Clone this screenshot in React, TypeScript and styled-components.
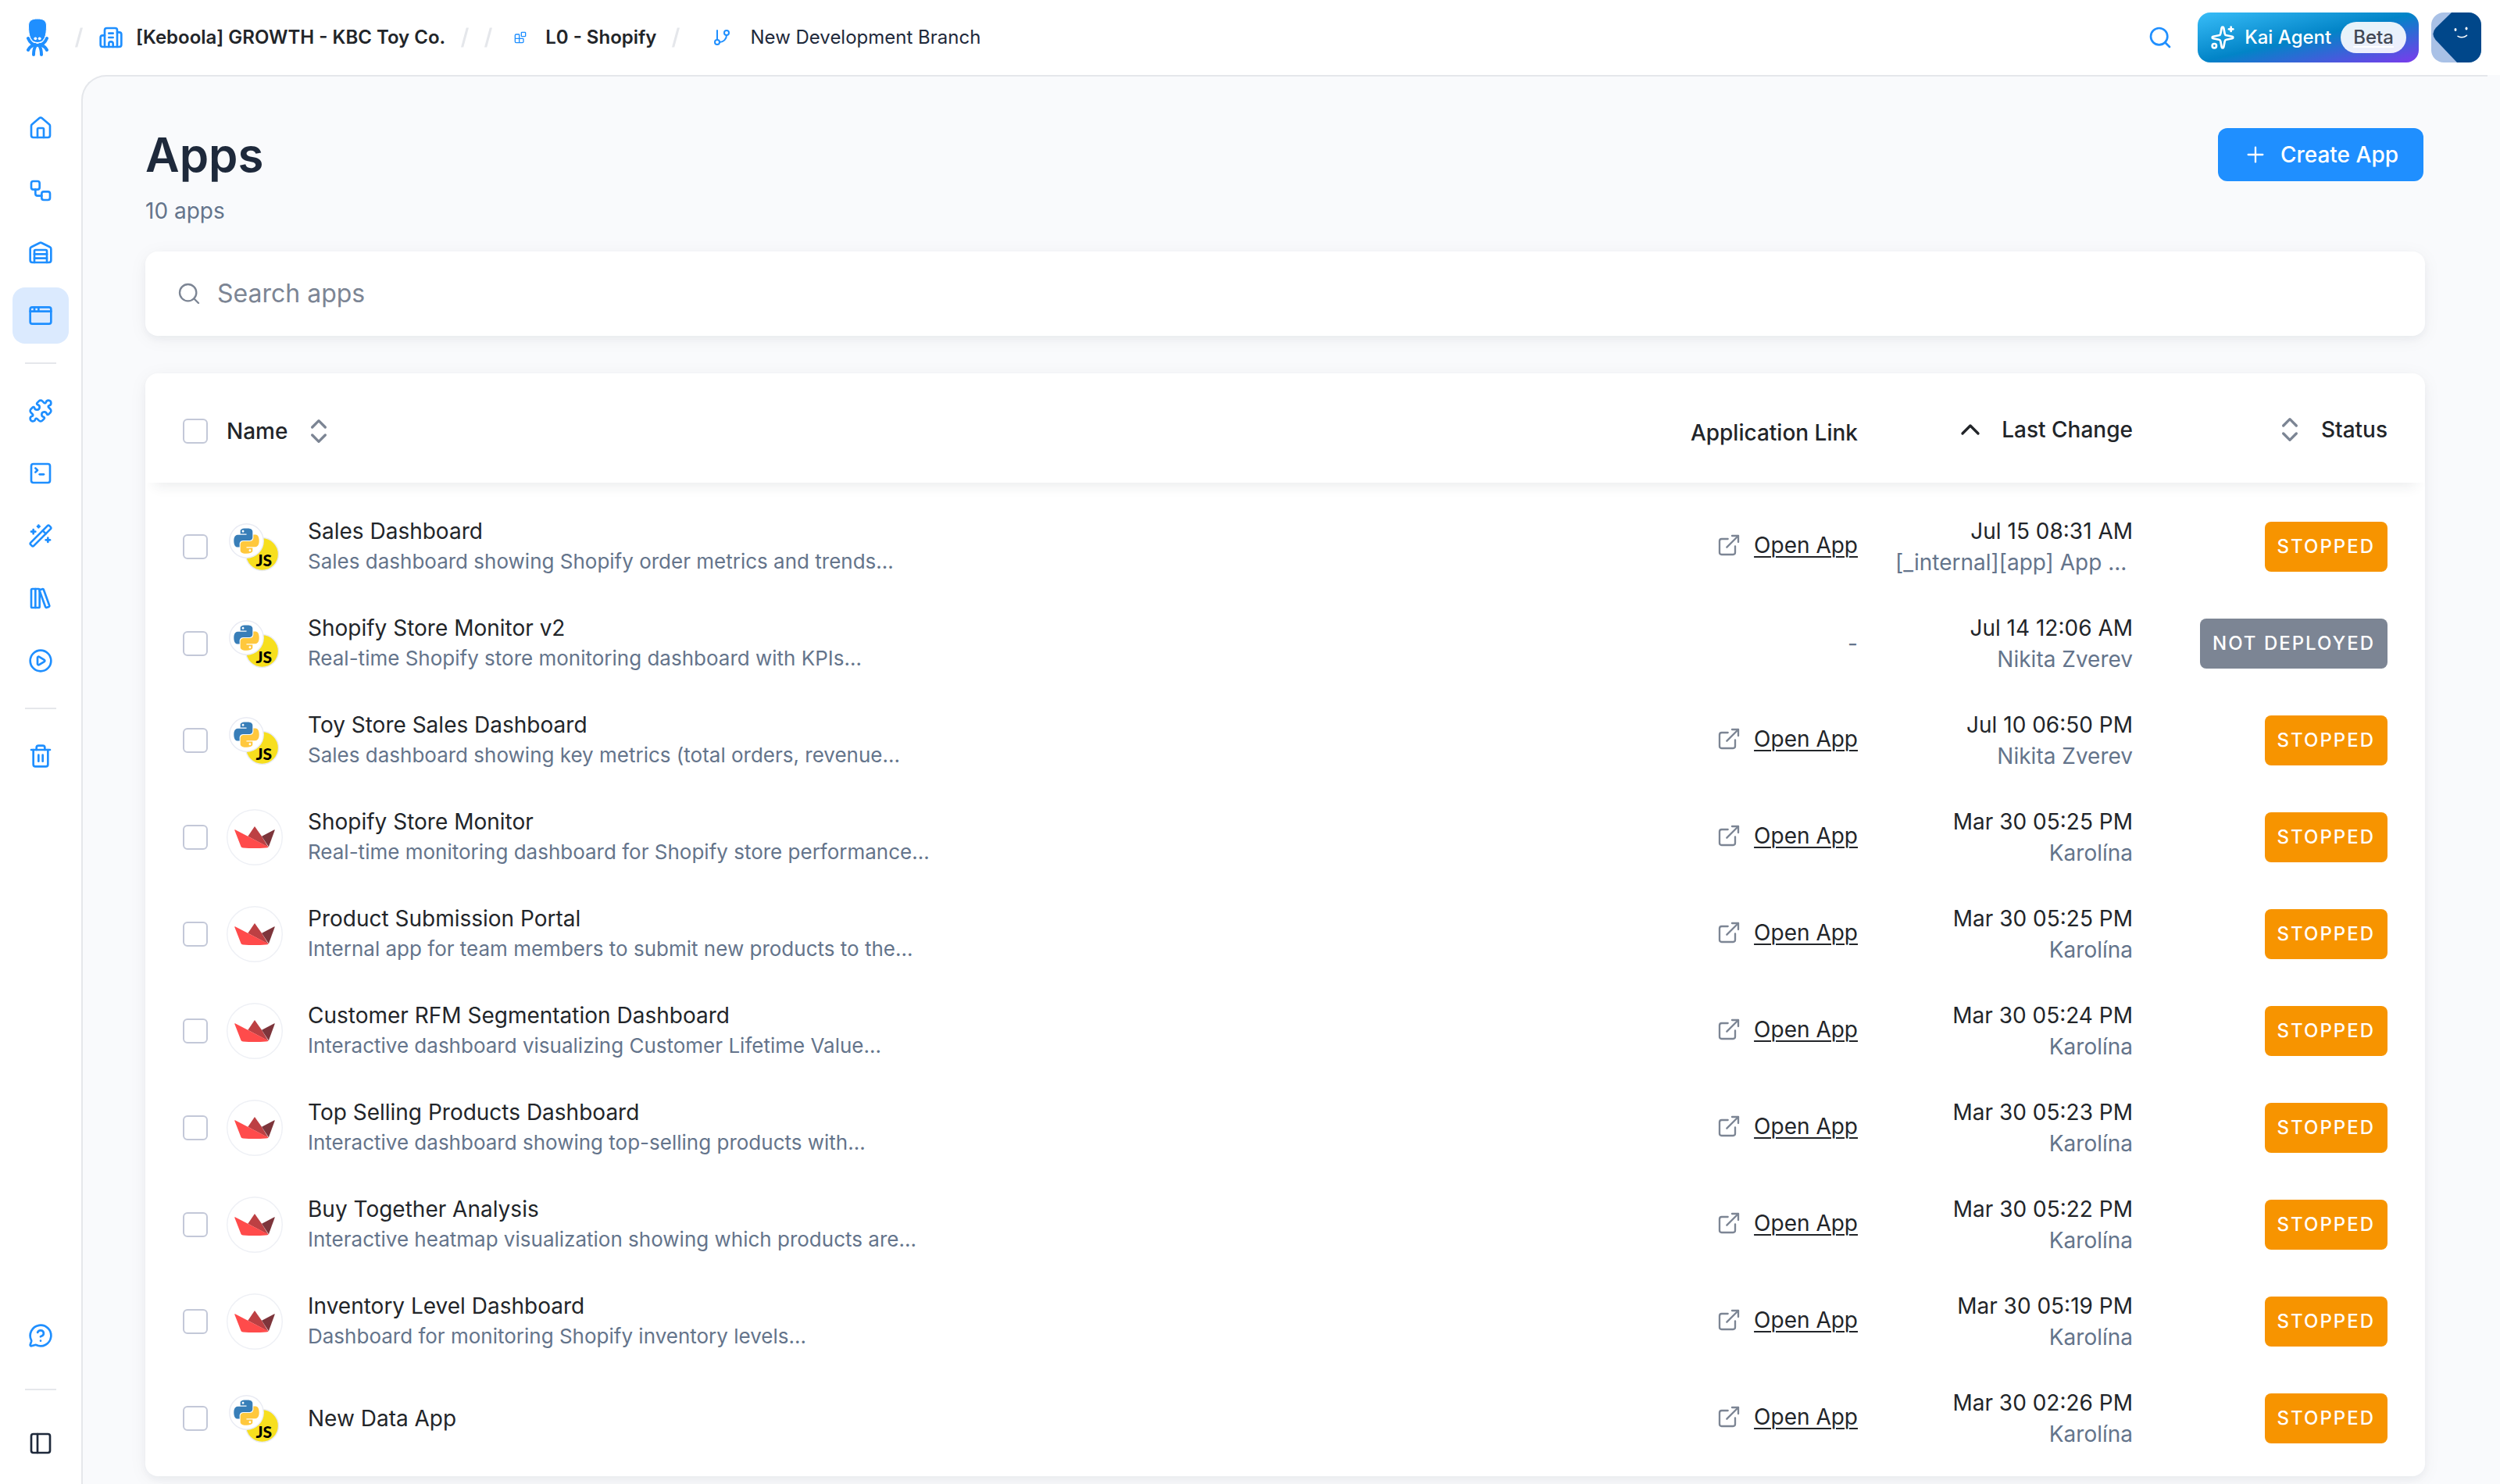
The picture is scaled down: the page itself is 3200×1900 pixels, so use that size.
import React from "react";
import styled, { createGlobalStyle, css } from "styled-components";
import {
  AppWindow,
  Blocks,
  Building2,
  ChevronUp,
  ChevronsUpDown,
  CirclePlay,
  ExternalLink,
  GitBranch,
  House,
  LibraryBig,
  MessageCircleQuestionMark,
  PanelLeft,
  Plus,
  Puzzle,
  Search,
  Sparkles,
  SquareTerminal,
  Trash2,
  WandSparkles,
  Warehouse,
  Workflow,
} from "lucide-react";

const color = {
  blue: "#1f8fff",
  ink: "#222529",
  navy: "#1e293b",
  slate: "#64748b",
  gray: "#7c8594",
  line: "#e5e7eb",
  page: "#f9fafc",
  orange: "#f79400",
};

const GlobalStyle = createGlobalStyle`
  *, *::before, *::after { box-sizing: border-box; }
  body {
    margin: 0;
    background: #fff;
    color: ${color.ink};
    font-family: Inter, "Liberation Sans", sans-serif;
    font-size: 28px;
    line-height: 40px;
    -webkit-font-smoothing: antialiased;
  }
  button, input { font: inherit; color: inherit; }
  svg { display: block; flex: none; }
`;

/* ---------- frame ---------- */

const Shell = styled.div`
  display: flex;
  flex-direction: column;
  min-height: 100vh;
`;

const TopBar = styled.header`
  display: flex;
  align-items: center;
  justify-content: space-between;
  height: 96px;
  padding: 0 24px 0 34px;
`;

const Body = styled.div`
  display: flex;
  flex: 1;
`;

const Sidebar = styled.nav`
  display: flex;
  flex-direction: column;
  justify-content: space-between;
  width: 104px;
  padding: 32px 16px 16px;
`;

const Main = styled.main`
  flex: 1;
  min-width: 0;
  display: flex;
  padding-right: 16px;
  background: ${color.page};
  border-top-left-radius: 32px;
`;

const Content = styled.div`
  flex: 1;
  min-width: 0;
  padding: 66px 80px 10px;
  border-top: 2px solid ${color.line};
  border-left: 2px solid ${color.line};
  border-top-left-radius: 32px;
`;

/* ---------- top bar ---------- */

const Crumbs = styled.div`
  display: flex;
  align-items: center;
  font-size: 24px;
  line-height: 32px;
`;

const Crumb = styled.a<{ $strong?: boolean; $gap: number }>`
  display: flex;
  align-items: center;
  gap: ${(p) => p.$gap}px;
  color: ${(p) => (p.$strong ? color.ink : color.navy)};
  font-weight: ${(p) => (p.$strong ? 600 : 400)};
  text-decoration: none;

  svg { color: ${color.blue}; }
`;

const SlashMark = styled.svg<{ $before: number; $after: number }>`
  margin: 0 ${(p) => p.$after}px 0 ${(p) => p.$before}px;
  color: ${color.line};
`;

const TopActions = styled.div`
  display: flex;
  align-items: center;
  gap: 16px;
`;

const PlainButton = styled.button`
  border: 0;
  padding: 0;
  background: none;
  cursor: pointer;
`;

const TopSearch = styled(PlainButton)`
  margin-right: 16px;
  color: ${color.blue};
`;

const KaiButton = styled(PlainButton)`
  display: flex;
  align-items: center;
  gap: 12px;
  height: 64px;
  padding: 0 16px;
  border-radius: 16px;
  color: #fff;
  font-size: 24px;
  font-weight: 500;
  background: linear-gradient(to bottom right, #38bdf8, #0284c7 50%, #7c3aed);
`;

const BetaPill = styled.span`
  padding: 0 16px;
  border-radius: 20px;
  color: #424854;
  background: rgba(255, 255, 255, 0.9);
  text-decoration: underline 2px #fff;
  text-underline-offset: 3px;
`;

const AvatarButton = styled(PlainButton)`
  overflow: hidden;
  border-radius: 16px;
`;

/* ---------- sidebar ---------- */

const NavGroup = styled.div`
  display: flex;
  flex-direction: column;
  align-items: center;
  gap: 8px;
`;

const NavLink = styled.a<{ $active?: boolean; $dark?: boolean }>`
  display: grid;
  place-items: center;
  width: 72px;
  height: 72px;
  border-radius: 16px;
  color: ${(p) => (p.$dark ? color.navy : color.blue)};
  background: ${(p) => (p.$active ? "#dbeafe" : "transparent")};
`;

const NavRule = styled.hr<{ $wide?: boolean }>`
  width: 40px;
  height: 2px;
  margin: ${(p) => (p.$wide ? 24 : 16)}px 0;
  border: 0;
  background: ${color.line};
`;

/* ---------- page header and search ---------- */

const PageHead = styled.div`
  display: flex;
  align-items: flex-start;
  justify-content: space-between;
  padding-right: 2px;
  margin-bottom: 32px;
`;

const Title = styled.h1`
  margin: 0;
  color: ${color.navy};
  font-size: 60px;
  font-weight: 600;
  line-height: 68px;
`;

const Subtitle = styled.p`
  margin: 18px 0 0;
  color: ${color.slate};
`;

const CreateButton = styled(PlainButton)`
  display: flex;
  align-items: center;
  gap: 16px;
  height: 68px;
  padding: 0 32px;
  border-radius: 12px;
  color: #fff;
  font-weight: 500;
  background: ${color.blue};
`;

const card = css`
  background: #fff;
  border-radius: 16px;
  box-shadow: 0 4px 24px rgba(30, 41, 59, 0.05), 0 4px 8px rgba(30, 41, 59, 0.04);
`;

const SearchCard = styled.label`
  ${card}
  display: flex;
  align-items: center;
  gap: 20px;
  height: 108px;
  padding: 0 40px;
  margin-bottom: 48px;
  color: ${color.gray};
`;

const SearchInput = styled.input`
  flex: 1;
  border: 0;
  padding: 0;
  outline: 0;
  background: none;
  font-size: 32px;

  &::placeholder {
    color: ${color.gray};
    opacity: 1;
  }
`;

/* ---------- table ---------- */

const TableCard = styled.section`
  ${card}
  padding-bottom: 12px;
`;

const Table = styled.table`
  display: block;
`;

const Head = styled.thead`
  display: block;
  margin-bottom: 20px;
  box-shadow: 0 16px 16px -12px rgba(30, 41, 59, 0.09);
`;

const Rows = styled.tbody`
  display: block;
`;

const Row = styled.tr<{ $head?: boolean }>`
  display: grid;
  grid-template-columns: minmax(0, 1fr) 288px 352px 350px;
  height: ${(p) => (p.$head ? 140 : 124)}px;
`;

const HeadCell = styled.th<{ $kind: "name" | "plain" | "sort" }>`
  display: flex;
  align-items: center;
  justify-content: ${(p) => (p.$kind === "name" ? "flex-start" : "flex-end")};
  padding: ${(p) => ({ name: 8, plain: 12, sort: 4 })[p.$kind]}px 24px 0;
  font-weight: 500;

  &:first-child { padding-left: 48px; }
  &:last-child { padding-right: 48px; }
`;

const SortButton = styled(PlainButton)<{ $on?: boolean }>`
  display: flex;
  align-items: center;
  gap: 20px;
  font-weight: 500;

  svg { color: ${(p) => (p.$on ? color.ink : color.gray)}; }
`;

const NameCell = styled.td`
  display: flex;
  align-items: center;
  padding: 0 24px 0 48px;
`;

const EndCell = styled.td`
  display: flex;
  flex-direction: column;
  align-items: flex-end;
  justify-content: center;
  padding: 0 24px;
  white-space: nowrap;

  &:last-child { padding-right: 48px; }
`;

const Checkbox = styled.input.attrs({ type: "checkbox" })`
  appearance: none;
  flex: none;
  width: 32px;
  height: 32px;
  margin: 0 24px 0 0;
  border: 2px solid #c3c8d8;
  border-radius: 6px;
  background: #fff;

  &:checked { background: ${color.blue}; border-color: ${color.blue}; }
`;

const AppText = styled.div`
  margin-left: 32px;
  white-space: nowrap;
`;

const AppName = styled.div`
  line-height: 38px;
`;

const AppSummary = styled.div`
  color: ${color.slate};
  font-size: 26px;
`;

const OpenLink = styled.a`
  display: flex;
  align-items: center;
  gap: 16px;
  padding-bottom: 4px;
  color: ${color.ink};
  text-decoration: underline 2px;
  text-underline-offset: 4px;

  svg { color: ${color.gray}; }
`;

const Muted = styled.span<{ $clipped?: boolean }>`
  width: ${(p) => (p.$clipped ? "100%" : "auto")};
  overflow: hidden;
  text-overflow: ellipsis;
  color: ${color.slate};
`;

const Badge = styled.span<{ $idle?: boolean }>`
  height: 64px;
  padding: 0 16px;
  border-radius: 8px;
  color: #fff;
  background: ${(p) => (p.$idle ? color.gray : color.orange)};
  font-size: 24px;
  font-weight: 500;
  line-height: 64px;
  letter-spacing: 2px;
`;

/* ---------- drawings ---------- */

const KeboolaMark = () => (
  <svg width="28" height="48" viewBox="0 0 28 48" fill="none" role="img" aria-label="Keboola">
    <g stroke={color.blue} strokeWidth="4" strokeLinecap="round">
      <path d="M2 25C4 30 8 34 14 34S24 30 26 25" />
      <path d="M2 40C4 36 7 34 11 33M26 40C24 36 21 34 17 33" />
      <path d="M9 46C9 41 10 37 12 34M19 46C19 41 18 37 16 34" />
    </g>
    <path
      d="M2.5 9C2.5 2 7 0 14 0S25.500 2 25.500 9C25.500 22 23 30.500 14 30.500S2.500 22 2.500 9Z"
      fill={color.blue}
      stroke="#fff"
      strokeWidth="1"
    />
    <circle cx="11.300" cy="25.300" r="1.900" fill="#fff" />
    <circle cx="16.700" cy="25.300" r="1.900" fill="#fff" />
  </svg>
);

const Slash = ({ before, after }: { before: number; after: number }) => (
  <SlashMark $before={before} $after={after} width="10" height="26" viewBox="0 0 10 26" aria-hidden="true">
    <path d="M0 25.500 6.800 0.500H10L3.200 25.500Z" fill="currentColor" />
  </SlashMark>
);

const Avatar = () => (
  <svg width="64" height="64" viewBox="0 0 64 64" role="img" aria-label="Account">
    <rect width="64" height="64" fill="#a9c1e6" />
    <path d="M26 0 6 19.500Q-1 27 5.500 35L33 64H64V0Z" fill="#00478a" />
    <ellipse cx="31" cy="22" rx="1.500" ry="2" fill="#fff" />
    <ellipse cx="45" cy="20.600" rx="1.500" ry="2" fill="#fff" />
    <path d="M34 30.300Q40 33.800 45.500 29.300" fill="none" stroke="#fff" strokeWidth="1.500" strokeLinecap="round" />
  </svg>
);

const StreamlitLogo = () => (
  <svg width="72" height="72" viewBox="0 0 72 72" role="img" aria-label="Streamlit">
    <circle cx="36" cy="36" r="35.300" fill="#fff" stroke="#eef0f5" strokeWidth="1.400" />
    <path d="M36 22 27.300 34.700 53.300 48.600 45 34.700Z" fill="#bd4043" />
    <path d="M45 34.700 61.200 26.200Q61.900 26.100 61.700 26.900L53.900 48.200Z" fill="#7d353b" />
    <path
      d="M10.300 26.900Q10.100 26.100 10.900 26.300L27.300 34.700 53.700 48.400Q52.800 49.300 50 49.400Q36 50.600 21 49.400Q19 49.200 18.500 48Z"
      fill="#ff4b4b"
    />
  </svg>
);

const JsText = styled.text`
  font-family: Lato, "Liberation Sans", sans-serif;
  font-size: 21px;
  font-weight: 900;
`;

const PythonJsLogo = () => (
  <svg width="72" height="72" viewBox="0 0 72 72" role="img" aria-label="Python and JavaScript">
    <circle cx="45.500" cy="45.500" r="21" fill="#f7df1e" stroke="#e9ebf3" strokeWidth="1.400" />
    <JsText x="37.500" y="61" fill="#000">JS</JsText>
    <circle cx="25.500" cy="28.500" r="21.700" fill="#fff" stroke="#e9ebf3" strokeWidth="1.400" />
    <g transform="translate(9.300 12.300) scale(1.350)">
      <path
        fill="#387eb8"
        d="M11.914 0C5.820 0 6.200 2.656 6.200 2.656l.007 2.752h5.814v.826H3.900S0 5.789 0 11.969c0 6.180 3.403 5.960 3.403 5.960h2.030v-2.867s-.109-3.420 3.350-3.420h5.766s3.240.052 3.240-3.148V3.202S18.280 0 11.913 0zM8.708 1.850c.578 0 1.046.470 1.046 1.052 0 .581-.468 1.051-1.046 1.051-.579 0-1.046-.470-1.046-1.051 0-.582.467-1.052 1.046-1.052z"
      />
      <path
        fill="#ffc83d"
        d="M12.087 24c6.092 0 5.712-2.656 5.712-2.656l-.007-2.752h-5.814v-.826h8.123s3.900.445 3.900-5.735c0-6.180-3.404-5.960-3.404-5.960h-2.030v2.867s.109 3.420-3.350 3.420H9.452s-3.240-.052-3.240 3.148v5.292S5.720 24 12.087 24zm3.206-1.850c-.579 0-1.046-.470-1.046-1.052 0-.581.467-1.051 1.046-1.051.578 0 1.046.470 1.046 1.051 0 .582-.468 1.052-1.046 1.052z"
      />
    </g>
  </svg>
);

/* ---------- data ---------- */

type AppRow = {
  name: string;
  summary?: string;
  kind: "python" | "streamlit";
  deployed: boolean;
  date: string;
  user: string;
  clipped?: boolean;
};

const apps: AppRow[] = [
  { name: "Sales Dashboard", summary: "Sales dashboard showing Shopify order metrics and trends...", kind: "python", deployed: true, date: "Jul 15 08:31 AM", user: "[_internal][app] App ...", clipped: true },
  { name: "Shopify Store Monitor v2", summary: "Real-time Shopify store monitoring dashboard with KPIs...", kind: "python", deployed: false, date: "Jul 14 12:06 AM", user: "Nikita Zverev" },
  { name: "Toy Store Sales Dashboard", summary: "Sales dashboard showing key metrics (total orders, revenue...", kind: "python", deployed: true, date: "Jul 10 06:50 PM", user: "Nikita Zverev" },
  { name: "Shopify Store Monitor", summary: "Real-time monitoring dashboard for Shopify store performance...", kind: "streamlit", deployed: true, date: "Mar 30 05:25 PM", user: "Karolína" },
  { name: "Product Submission Portal", summary: "Internal app for team members to submit new products to the...", kind: "streamlit", deployed: true, date: "Mar 30 05:25 PM", user: "Karolína" },
  { name: "Customer RFM Segmentation Dashboard", summary: "Interactive dashboard visualizing Customer Lifetime Value...", kind: "streamlit", deployed: true, date: "Mar 30 05:24 PM", user: "Karolína" },
  { name: "Top Selling Products Dashboard", summary: "Interactive dashboard showing top-selling products with...", kind: "streamlit", deployed: true, date: "Mar 30 05:23 PM", user: "Karolína" },
  { name: "Buy Together Analysis", summary: "Interactive heatmap visualization showing which products are...", kind: "streamlit", deployed: true, date: "Mar 30 05:22 PM", user: "Karolína" },
  { name: "Inventory Level Dashboard", summary: "Dashboard for monitoring Shopify inventory levels...", kind: "streamlit", deployed: true, date: "Mar 30 05:19 PM", user: "Karolína" },
  { name: "New Data App", kind: "python", deployed: true, date: "Mar 30 02:26 PM", user: "Karolína" },
];

const navGroups = [
  [
    { label: "Home", Icon: House },
    { label: "Flows", Icon: Workflow },
    { label: "Storage", Icon: Warehouse },
    { label: "Apps", Icon: AppWindow, active: true },
  ],
  [
    { label: "Components", Icon: Puzzle },
    { label: "Workspaces", Icon: SquareTerminal },
    { label: "Transformations", Icon: WandSparkles },
    { label: "Catalog", Icon: LibraryBig },
    { label: "Jobs", Icon: CirclePlay },
  ],
  [{ label: "Trash", Icon: Trash2 }],
];

/* ---------- page ---------- */

export default function App() {
  return (
    <Shell>
      <GlobalStyle />
      <TopBar>
        <Crumbs>
          <KeboolaMark />
          <Slash before={34} after={20} />
          <Crumb href="#" $strong $gap={16}>
            <Building2 size={32} />
            [Keboola] GROWTH - KBC Toy Co.
          </Crumb>
          <Slash before={20} after={20} />
          <Slash before={0} after={28} />
          <Crumb href="#" $strong $gap={24}>
            <Blocks size={16} />
            L0 - Shopify
          </Crumb>
          <Slash before={20} after={42} />
          <Crumb href="#" $gap={24}>
            <GitBranch size={24} />
            New Development Branch
          </Crumb>
        </Crumbs>
        <TopActions>
          <TopSearch aria-label="Search">
            <Search size={32} />
          </TopSearch>
          <KaiButton>
            <Sparkles size={32} />
            Kai Agent
            <BetaPill>Beta</BetaPill>
          </KaiButton>
          <AvatarButton aria-label="Account">
            <Avatar />
          </AvatarButton>
        </TopActions>
      </TopBar>

      <Body>
        <Sidebar>
          <NavGroup>
            {navGroups.map((group, g) => (
              <React.Fragment key={g}>
                {g > 0 && <NavRule />}
                {group.map(({ label, Icon, active }: any) => (
                  <NavLink key={label} href="#" aria-label={label} $active={active}>
                    <Icon size={32} />
                  </NavLink>
                ))}
              </React.Fragment>
            ))}
          </NavGroup>
          <NavGroup>
            <NavLink href="#" aria-label="Help">
              <MessageCircleQuestionMark size={32} />
            </NavLink>
            <NavRule $wide />
            <NavLink href="#" aria-label="Expand sidebar" $dark>
              <PanelLeft size={32} />
            </NavLink>
          </NavGroup>
        </Sidebar>

        <Main>
          <Content>
            <PageHead>
              <div>
                <Title>Apps</Title>
                <Subtitle>{apps.length} apps</Subtitle>
              </div>
              <CreateButton>
                <Plus size={32} strokeWidth={1.75} />
                Create App
              </CreateButton>
            </PageHead>

            <SearchCard>
              <Search size={32} strokeWidth={1.75} />
              <SearchInput type="text" placeholder="Search apps" aria-label="Search apps" />
            </SearchCard>

            <TableCard>
              <Table>
                <Head>
                  <Row $head>
                    <HeadCell $kind="name">
                      <Checkbox aria-label="Select all apps" />
                      <SortButton>
                        Name
                        <ChevronsUpDown size={40} />
                      </SortButton>
                    </HeadCell>
                    <HeadCell $kind="plain">Application Link</HeadCell>
                    <HeadCell $kind="sort">
                      <SortButton $on>
                        <ChevronUp size={40} />
                        Last Change
                      </SortButton>
                    </HeadCell>
                    <HeadCell $kind="sort">
                      <SortButton>
                        <ChevronsUpDown size={40} />
                        Status
                      </SortButton>
                    </HeadCell>
                  </Row>
                </Head>
                <Rows>
                  {apps.map((app) => (
                    <Row key={app.name}>
                      <NameCell>
                        <Checkbox aria-label={`Select ${app.name}`} />
                        {app.kind === "python" ? <PythonJsLogo /> : <StreamlitLogo />}
                        <AppText>
                          <AppName>{app.name}</AppName>
                          {app.summary && <AppSummary>{app.summary}</AppSummary>}
                        </AppText>
                      </NameCell>
                      <EndCell>
                        {app.deployed ? (
                          <OpenLink href="#">
                            <ExternalLink size={32} strokeWidth={1.75} />
                            Open App
                          </OpenLink>
                        ) : (
                          <Muted>-</Muted>
                        )}
                      </EndCell>
                      <EndCell>
                        <span>{app.date}</span>
                        <Muted $clipped={app.clipped}>{app.user}</Muted>
                      </EndCell>
                      <EndCell>
                        <Badge $idle={!app.deployed}>{app.deployed ? "STOPPED" : "NOT DEPLOYED"}</Badge>
                      </EndCell>
                    </Row>
                  ))}
                </Rows>
              </Table>
            </TableCard>
          </Content>
        </Main>
      </Body>
    </Shell>
  );
}
